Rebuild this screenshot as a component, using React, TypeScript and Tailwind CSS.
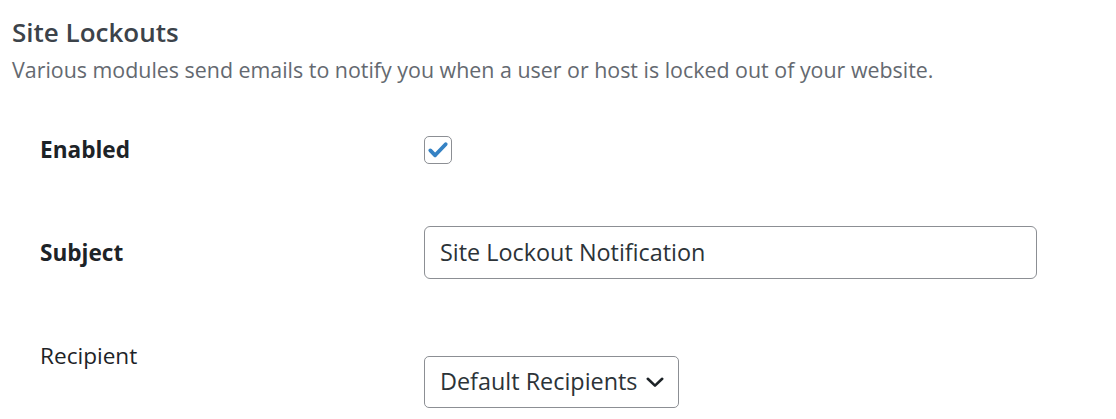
export default function App() {
  return (
    <div className="min-h-screen bg-white pl-3 pt-[14px] font-['Open_Sans',sans-serif]">
      <h2 className="text-[26px] leading-[36px] font-semibold text-[#3c434a]">Site Lockouts</h2>
      <p className="mt-[5px] text-[21.4px] leading-[30px] text-[#646970]">
        Various modules send emails to notify you when a user or host is locked out of your website.
      </p>

      <div className="mt-[50px] pl-7">
        {/* Enabled */}
        <div className="flex items-center h-[30px]">
          <div className="w-[384px] text-[22.6px] font-bold text-[#1d2327]">Enabled</div>
          <div className="w-[28px] h-[28px] rounded-[5px] border border-[#8c8f94] bg-white flex items-center justify-center">
            <svg width="24" height="24" viewBox="0 0 20 20">
              <path d="M3.6 10.4 L7.6 14.4 L16.4 5.2" fill="none" stroke="#3582c4" strokeWidth="3.2" strokeLinecap="round" strokeLinejoin="round" />
            </svg>
          </div>
        </div>

        {/* Subject */}
        <div className="flex items-center mt-[61px]">
          <div className="w-[384px] text-[22.6px] font-bold text-[#1d2327]">Subject</div>
          <div className="w-[613px] h-[53px] rounded-[6px] border border-[#8c8f94] bg-white flex items-center px-[15px] text-[23.4px] text-[#2c3338]">
            Site Lockout Notification
          </div>
        </div>

        {/* Recipient */}
        <div className="flex items-start mt-[62px]">
          <div className="w-[384px] text-[22.6px] leading-[30px] text-[#1d2327]">Recipient</div>
          <div className="mt-[15px] h-[52px] rounded-[5px] border border-[#8c8f94] bg-white flex items-center pl-[15px] pr-[14px] gap-[8px] text-[23.4px] text-[#2c3338]">
            <span>Default Recipients</span>
            <svg width="18" height="11" viewBox="0 0 18 11">
              <path d="M1.8 1.8 L9 8.6 L16.2 1.8" fill="none" stroke="#1d2327" strokeWidth="2.6" strokeLinecap="round" strokeLinejoin="round" />
            </svg>
          </div>
        </div>
      </div>
    </div>
  );
}
